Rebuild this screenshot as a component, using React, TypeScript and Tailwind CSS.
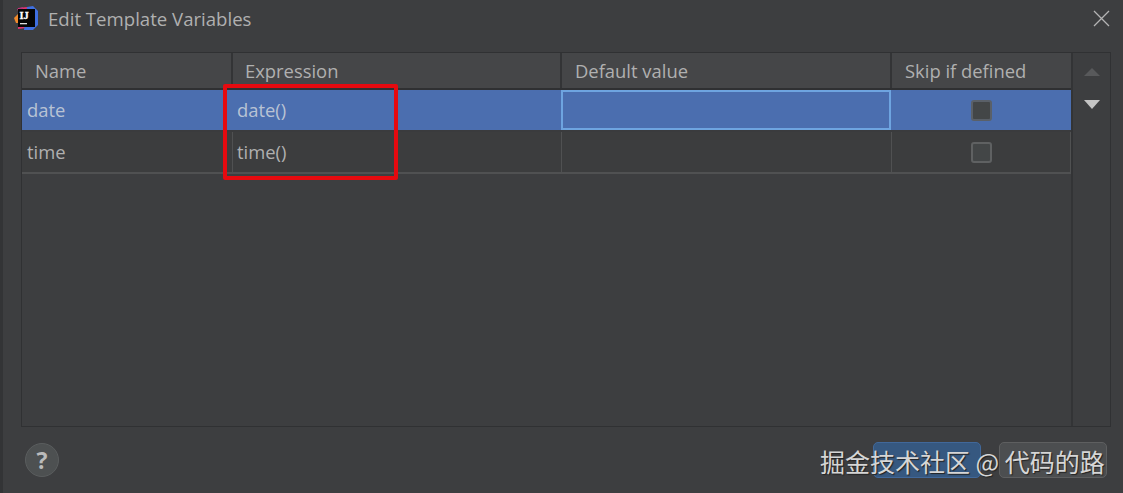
import React from 'react'

const font = { fontFamily: '"Open Sans", "Noto Sans", sans-serif' }

const Logo = () => (
  <svg width="26" height="27" viewBox="0 0 26 27">
    <path d="M5 3 L14 2 L13 23 L5 24 Z" fill="#e0336e" />
    <path d="M1 13 L5 9 L7 18 L3 18 Z" fill="#f08a2c" />
    <path d="M14 2 L20 1 L25 6 L25 20 L20 25 L11 25 Z" fill="#3f6fe0" />
    <path d="M4 4 L10 2 L8 12 Z" fill="#b5357f" />
    <rect x="5" y="4" width="17" height="18" fill="#050505" />
    <text x="6.5" y="14" fontSize="10.5" fontWeight="700" fill="#fff" stroke="#fff" strokeWidth="0.3" fontFamily="Liberation Serif, serif">IJ</text>
    <rect x="7" y="18" width="7" height="1.3" fill="#ddd" />
  </svg>
)

const HeaderCell = ({ label, className, pad }: { label: string; className: string; pad: string }) => (
  <div className={`${className} ${pad} flex items-center text-[18.4px] text-[#b0b0b0] border-r-2 border-[#333436]`}>{label}</div>
)

const Checkbox = ({ selected }: { selected?: boolean }) => (
  <div
    className={`w-[21px] h-[21px] rounded-[3px] bg-[#434647] border-2 ${selected ? 'border-[#5a6068]' : 'border-[#5f6162]'}`}
  />
)

const Row = ({ name, expr, selected }: { name: string; expr: string; selected?: boolean }) => (
  <div className={`flex h-[42px] border-b-2 text-[18.4px] ${selected ? 'bg-[#4b6eaf] border-[#3a3b3d] text-[#b9c3d4]' : 'bg-[#3c3d3e] border-[#505152] text-[#b0b0b0]'}`}>
    <div className="w-[210px] flex items-center pl-[5px]">{name}</div>
    <div className={`w-[329px] flex items-center pl-[4px] border-l ${selected ? 'border-[#4b6eaf]' : 'border-[#505152]'}`}>{expr}</div>
    <div className={`w-[330px] flex ${selected ? 'border-2 border-[#6ea4e0]' : 'border-l border-[#505152]'}`} />
    <div className={`flex-1 flex items-center justify-center ${selected ? '' : 'border-x border-[#505152]'}`}>
      <Checkbox selected={selected} />
    </div>
  </div>
)

export default function App() {
  return (
    <div style={font} className="relative w-[1123px] h-[493px] overflow-hidden bg-[#3d3e40] border-l-[3px] border-[#333436]">
      <div className="h-[52px] flex items-start pl-[10px] pt-[5px]">
        <Logo />
        <span className="ml-[9px] text-[18.6px] leading-[28px] text-[#b0b0b0]">Edit Template Variables</span>
        <svg className="ml-auto mr-[13px] mt-[5px]" width="17" height="17" viewBox="0 0 17 17">
          <path d="M1 1 L16 16 M16 1 L1 16" stroke="#b4b4b4" strokeWidth="1.3" fill="none" />
        </svg>
      </div>

      <div className="ml-[18px] w-[1090px] h-[375px] flex border border-[#303133]">
        <div className="w-[1051px] border-r-2 border-[#333436]">
          <div className="flex h-[37px] bg-[#454648] border-b-2 border-[#2f3032]">
            <HeaderCell label="Name" className="w-[211px]" pad="pl-[13px]" />
            <HeaderCell label="Expression" className="w-[329px]" pad="pl-[12px]" />
            <HeaderCell label="Default value" className="w-[330px]" pad="pl-[13px]" />
            <div className="flex-1 flex items-center pl-[13px] text-[18.4px] text-[#b0b0b0]">Skip if defined</div>
          </div>
          <Row name="date" expr="date()" selected />
          <Row name="time" expr="time()" />
        </div>
        <div className="flex-1 flex flex-col items-center pt-[15px] gap-[24px]">
          <div className="w-0 h-0 border-x-[8px] border-x-transparent border-b-[8px] border-b-[#58595b]" />
          <div className="w-0 h-0 border-x-[8px] border-x-transparent border-t-[9px] border-t-[#c4c4c4]" />
        </div>
      </div>

      <div className="flex items-center justify-between h-[66px] pl-[22px] pr-[16px]">
        <div className="w-[34px] h-[34px] rounded-full bg-[#4d5051] border border-[#5a5d5e] flex items-center justify-center text-[23px] font-bold text-[#bbbbbb]">?</div>
        <div className="flex gap-[18px] text-[17px]">
          <div className="w-[108px] h-[36px] rounded-[5px] bg-[#365880] border border-[#41689a]" />
          <div className="w-[108px] h-[36px] rounded-[5px] bg-[#4c4e50] border border-[#5e5f60]" />
        </div>
      </div>

      {/* red annotation and watermark sit over the dialog */}
      <div className="absolute left-[220px] top-[84px] w-[175px] h-[96px] border-[4px] border-[#e60a0f] rounded-[2px]" />
      <div
        className="absolute left-[817px] top-[444px] text-[25px] leading-[34px] text-[#d6d6d6] whitespace-nowrap"
        style={{ fontFamily: '"Noto Sans CJK SC", sans-serif', textShadow: '1px 1px 1px #222' }}
      >
        掘金技术社区 @ 代码的路
      </div>
    </div>
  )
}
